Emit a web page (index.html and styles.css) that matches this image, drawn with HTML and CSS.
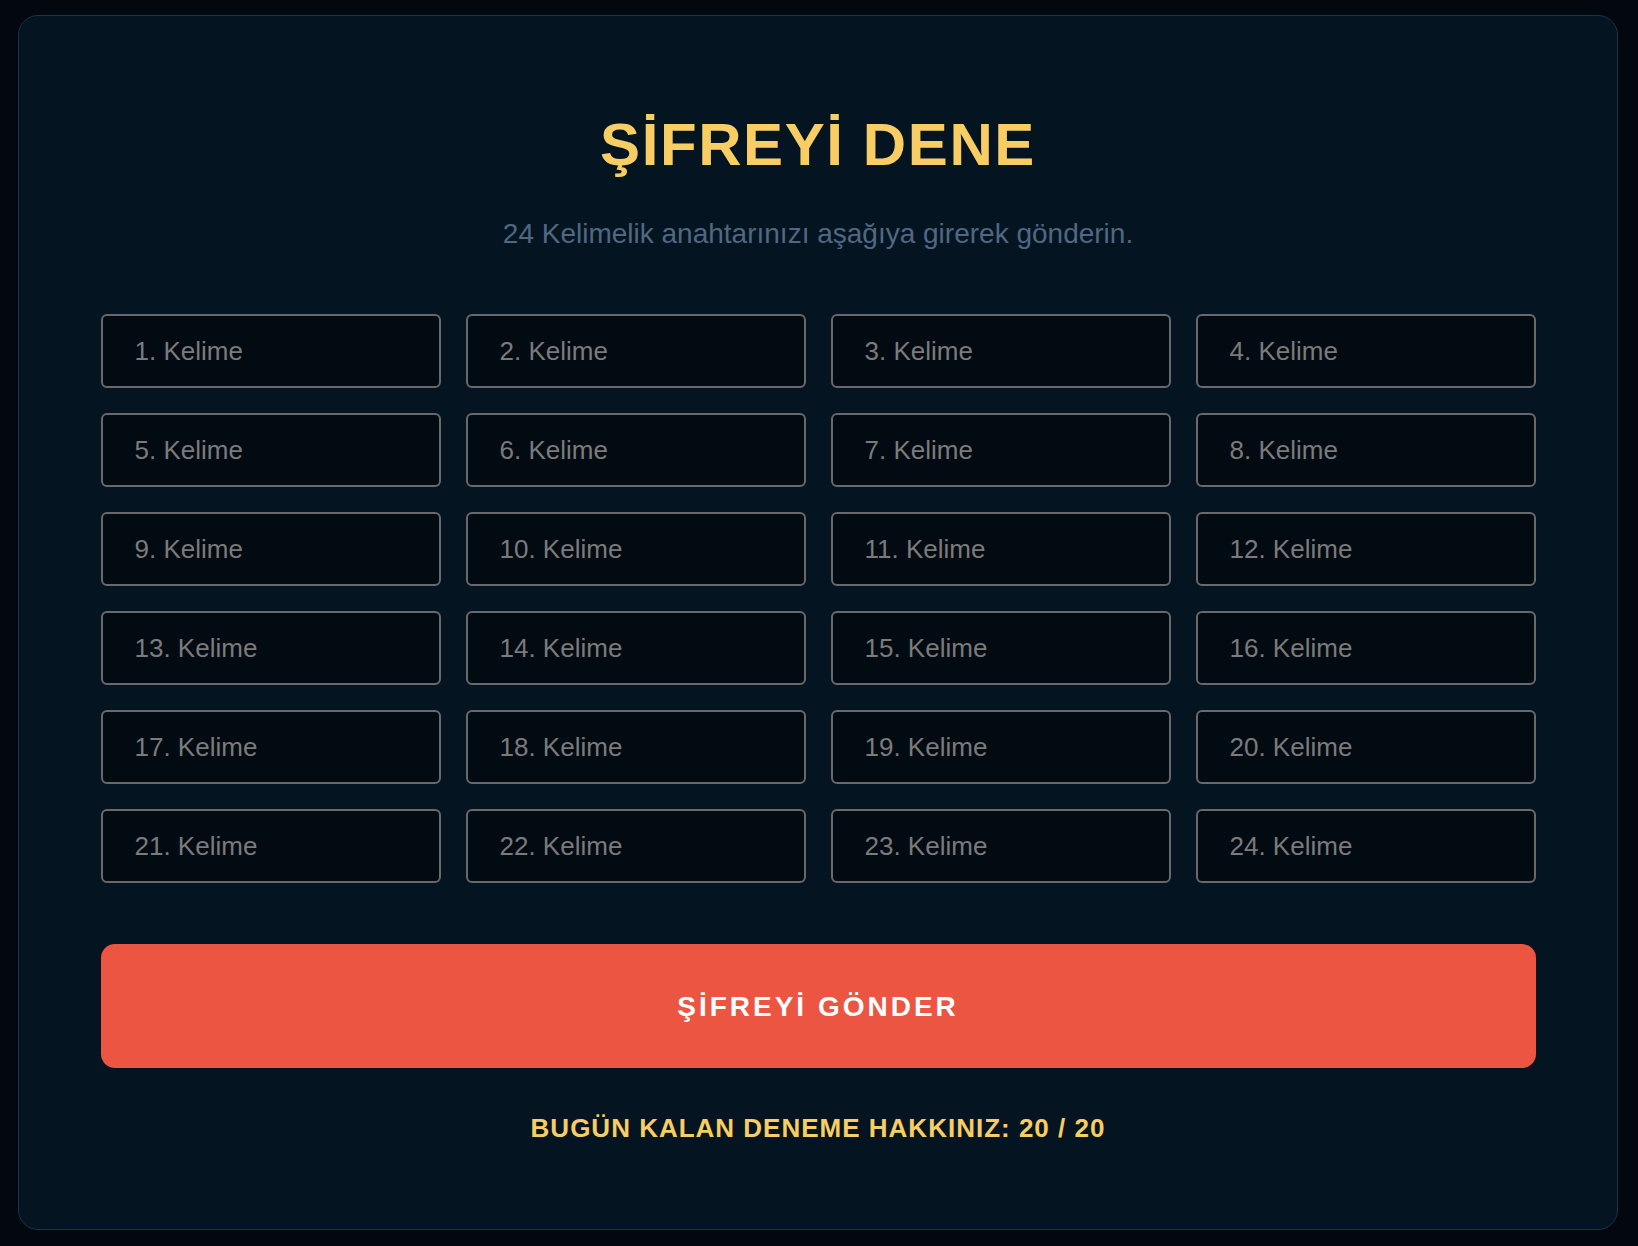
FILE: index.html
```html
<!DOCTYPE html>
<html lang="tr">
<head>
<meta charset="utf-8">
<title>Şifreyi Dene</title>
<link rel="stylesheet" href="styles.css">
</head>
<body>
<main class="card">
  <h1 class="title">ŞİFREYİ DENE</h1>
  <p class="subtitle">24 Kelimelik anahtarınızı aşağıya girerek gönderin.</p>
  <form class="form" onsubmit="return false;">
    <div class="grid">
      <input class="word" type="text" placeholder="1. Kelime">
      <input class="word" type="text" placeholder="2. Kelime">
      <input class="word" type="text" placeholder="3. Kelime">
      <input class="word" type="text" placeholder="4. Kelime">
      <input class="word" type="text" placeholder="5. Kelime">
      <input class="word" type="text" placeholder="6. Kelime">
      <input class="word" type="text" placeholder="7. Kelime">
      <input class="word" type="text" placeholder="8. Kelime">
      <input class="word" type="text" placeholder="9. Kelime">
      <input class="word" type="text" placeholder="10. Kelime">
      <input class="word" type="text" placeholder="11. Kelime">
      <input class="word" type="text" placeholder="12. Kelime">
      <input class="word" type="text" placeholder="13. Kelime">
      <input class="word" type="text" placeholder="14. Kelime">
      <input class="word" type="text" placeholder="15. Kelime">
      <input class="word" type="text" placeholder="16. Kelime">
      <input class="word" type="text" placeholder="17. Kelime">
      <input class="word" type="text" placeholder="18. Kelime">
      <input class="word" type="text" placeholder="19. Kelime">
      <input class="word" type="text" placeholder="20. Kelime">
      <input class="word" type="text" placeholder="21. Kelime">
      <input class="word" type="text" placeholder="22. Kelime">
      <input class="word" type="text" placeholder="23. Kelime">
      <input class="word" type="text" placeholder="24. Kelime">
    </div>
    <button class="submit" type="submit">ŞİFREYİ GÖNDER</button>
  </form>
  <p class="remaining">BUGÜN KALAN DENEME HAKKINIZ: 20 / 20</p>
</main>
</body>
</html>
```

FILE: styles.css
```css
* {
  box-sizing: border-box;
}

html, body {
  margin: 0;
  padding: 0;
}

body {
  background: #02080e;
  font-family: "Liberation Sans", Arial, Helvetica, sans-serif;
  min-height: 1246px;
  padding-top: 15px;
}

.card {
  margin: 0 20px 0 18px;
  background: #041421;
  border: 1px solid #163350;
  border-radius: 20px;
  padding: 99px 0 88px;
  display: flex;
  flex-direction: column;
  align-items: center;
}

.title {
  margin: 0;
  font-size: 60px;
  line-height: 60px;
  font-weight: 700;
  letter-spacing: 1.6px;
  color: #f8cd63;
  text-align: center;
}

.subtitle {
  margin: 45px 0 0;
  font-size: 28px;
  line-height: 28px;
  color: #506881;
  text-align: center;
}

.form {
  margin-top: 66px;
  display: flex;
  flex-direction: column;
  width: 1435px;
}

.grid {
  display: grid;
  grid-template-columns: repeat(4, 340px);
  grid-auto-rows: 74px;
  gap: 25px;
}

.word {
  height: 74px;
  width: 100%;
  margin: 0;
  border: 2px solid #69696b;
  border-radius: 6px;
  background: #020a12;
  color: #c8c8c8;
  font-family: "Liberation Sans", Arial, Helvetica, sans-serif;
  font-size: 26px;
  padding: 0 32px;
  outline: none;
}

.word::placeholder {
  color: #7b7b7b;
  opacity: 1;
}

.submit {
  margin-top: 61px;
  height: 124px;
  border: none;
  border-radius: 14px;
  background: #eb5541;
  color: #ffffff;
  font-family: "Liberation Sans", Arial, Helvetica, sans-serif;
  font-size: 28px;
  font-weight: 700;
  letter-spacing: 3px;
  padding-top: 2px;
  cursor: pointer;
}

.remaining {
  margin: 47px 0 0;
  font-size: 26px;
  line-height: 26px;
  font-weight: 700;
  letter-spacing: 1px;
  color: #f8cd63;
  text-align: center;
}
```
